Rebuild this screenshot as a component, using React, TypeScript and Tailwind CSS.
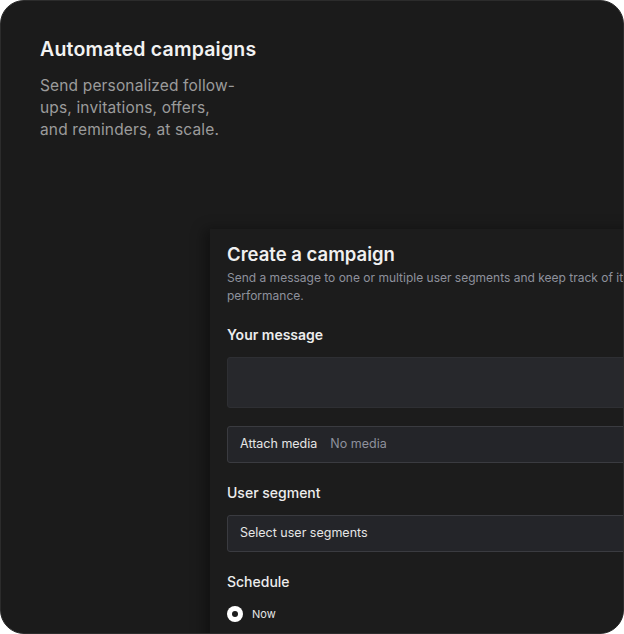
import React from "react";

export default function App() {
  return (
    <div className="w-[624px] h-[634px] bg-white" style={{ fontFamily: "Inter, 'Noto Sans', sans-serif" }}>
      <div className="relative w-full h-full rounded-[24px] bg-[#1b1b1b] border border-[#2c2c2c] overflow-hidden">
        <div className="pl-[39px] pt-[34px]">
          <h1 className="text-[19.5px] leading-[28px] font-semibold text-[#f2f2f2] tracking-[0.2px]">Automated campaigns</h1>
          <p className="mt-[12px] w-[202px] text-[15.5px] leading-[22px] text-[#9b9b9b] tracking-[0.15px]">
            Send personalized follow-ups, invitations, offers, and reminders, at scale.
          </p>
        </div>
        <div className="absolute left-[209px] top-[228px] w-[470px] h-[440px] bg-[#1c1c1c] shadow-[-6px_0_12px_rgba(0,0,0,0.35)] px-[17px] pt-[13px]">
          <h2 className="text-[18.5px] leading-[24px] font-semibold text-[#f0f0f0]">Create a campaign</h2>
          <p className="mt-[3px] text-[12px] leading-[18px] text-[#8e919c]">
            Send a message to one or multiple user segments and keep track of its performance.
          </p>
          <div className="mt-[20px] text-[14px] leading-[20px] font-semibold text-[#ededed]">Your message</div>
          <div className="mt-[12px] h-[51px] rounded-[3px] bg-[#27282c] border border-[#2e2f33]" />
          <div className="mt-[18px] h-[37px] rounded-[3px] bg-[#242529] border border-[#3a3b40] flex items-center px-[12px] text-[12.5px]">
            <span className="text-[#e6e6e6]">Attach media</span>
            <span className="ml-[13px] text-[#8e919c]">No media</span>
          </div>
          <div className="mt-[20px] text-[14px] leading-[20px] font-medium text-[#ededed]">User segment</div>
          <div className="mt-[12px] h-[37px] rounded-[3px] bg-[#242529] border border-[#3a3b40] flex items-center px-[12px] text-[12.5px] text-[#e6e6e6]">
            Select user segments
          </div>
          <div className="mt-[20px] text-[14px] leading-[20px] font-medium text-[#ededed]">Schedule</div>
          <div className="mt-[14px] flex items-center gap-[9px]">
            <div className="w-[16px] h-[16px] rounded-full bg-white flex items-center justify-center">
              <div className="w-[6px] h-[6px] rounded-full bg-[#1c1c1c]" />
            </div>
            <span className="text-[11px] text-[#e6e6e6]">Now</span>
          </div>
          <div className="mt-[11px] flex items-center gap-[9px]">
            <div className="w-[16px] h-[16px] rounded-full border-2 border-[#8a8a8a]" />
            <span className="text-[11px] text-[#e6e6e6]">Later</span>
          </div>
        </div>
      </div>
    </div>
  );
}
